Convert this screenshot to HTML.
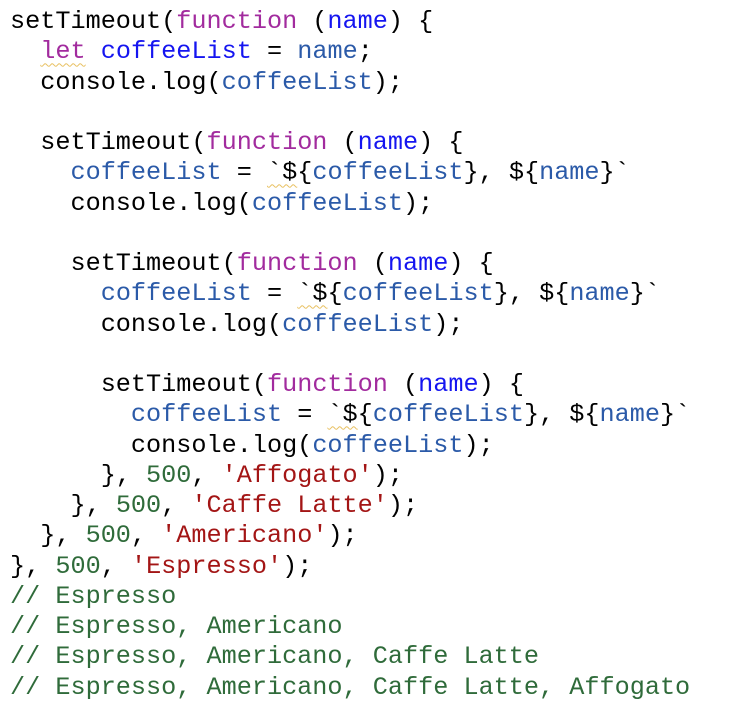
<!DOCTYPE html>
<html><head><style>
html,body{margin:0;padding:0;background:#fff;width:732px;height:714px;overflow:hidden}
pre{margin:0;padding:7px 0 0 10px;font-family:"Liberation Mono",monospace;font-size:25.2px;line-height:30.25px;color:#000}
.k{color:#a22b9e}.b{color:#1515f0}.v{color:#2b5aa8}.n{color:#2f6b3a}.s{color:#a31515}.c{color:#2f6b3a}
.w{text-decoration:underline wavy #e8c060;text-decoration-thickness:1px;text-underline-offset:4px}
</style></head><body><pre>setTimeout(<span class="k">function</span> (<span class="b">name</span>) {
  <span class="k w">let</span> <span class="b">coffeeList</span> = <span class="v">name</span>;
  console.log(<span class="v">coffeeList</span>);

  setTimeout(<span class="k">function</span> (<span class="b">name</span>) {
    <span class="v">coffeeList</span> = <span class="w">`$</span>{<span class="v">coffeeList</span>}, ${<span class="v">name</span>}`
    console.log(<span class="v">coffeeList</span>);

    setTimeout(<span class="k">function</span> (<span class="b">name</span>) {
      <span class="v">coffeeList</span> = <span class="w">`$</span>{<span class="v">coffeeList</span>}, ${<span class="v">name</span>}`
      console.log(<span class="v">coffeeList</span>);

      setTimeout(<span class="k">function</span> (<span class="b">name</span>) {
        <span class="v">coffeeList</span> = <span class="w">`$</span>{<span class="v">coffeeList</span>}, ${<span class="v">name</span>}`
        console.log(<span class="v">coffeeList</span>);
      }, <span class="n">500</span>, <span class="s">'Affogato'</span>);
    }, <span class="n">500</span>, <span class="s">'Caffe Latte'</span>);
  }, <span class="n">500</span>, <span class="s">'Americano'</span>);
}, <span class="n">500</span>, <span class="s">'Espresso'</span>);
<span class="c">// Espresso</span>
<span class="c">// Espresso, Americano</span>
<span class="c">// Espresso, Americano, Caffe Latte</span>
<span class="c">// Espresso, Americano, Caffe Latte, Affogato</span></pre></body></html>
